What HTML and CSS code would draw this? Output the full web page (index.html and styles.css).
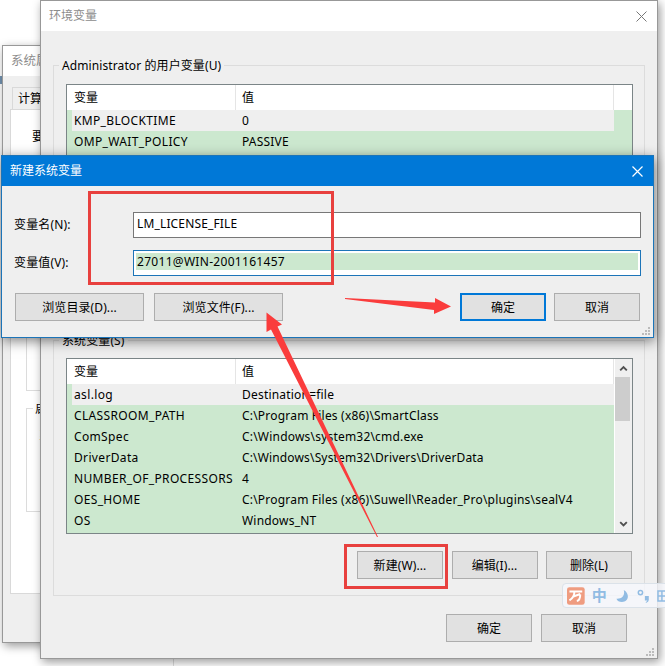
FILE: index.html
```html
<!DOCTYPE html>
<html lang="zh-CN">
<head>
<meta charset="utf-8">
<title>环境变量</title>
<link rel="stylesheet" href="styles.css">
</head>
<body>
<main class="desktop">
  <i class="desktop-line"></i>
  <i class="desktop-mark"></i>
  <section class="window props">
    <header class="titlebar">系统属性</header>
    <div class="tab">计算机名</div>
    <div class="sheet">
      <p class="sheet-note">要进行</p>
      <div class="sheet-group first"></div>
      <div class="sheet-group second"><span class="sheet-legend">启动</span><p class="sheet-text">系统</p></div>
    </div>
  </section>

  <section class="window env">
    <header class="titlebar">环境变量
      <svg class="close" viewBox="0 0 11 11"><path d="M.5.5l10 10M10.5.5l-10 10"/></svg>
    </header>
    <div class="group user">
      <div class="legend">Administrator 的用户变量(U)</div>
      <div class="list">
        <div class="table">
          <div class="row head"><span>变量</span><span>值</span></div>
          <div class="row selected"><span>KMP_BLOCKTIME</span><span>0</span></div>
          <div class="row"><span>OMP_WAIT_POLICY</span><span>PASSIVE</span></div>
        </div>
        <div class="gutter"></div>
      </div>
    </div>
    <div class="group system">
      <div class="legend">系统变量(S)</div>
      <div class="list">
        <div class="table">
          <div class="row head"><span>变量</span><span>值</span></div>
          <div class="row selected"><span>asl.log</span><span>Destination=file</span></div>
          <div class="row"><span>CLASSROOM_PATH</span><span>C:\Program Files (x86)\SmartClass</span></div>
          <div class="row"><span>ComSpec</span><span>C:\Windows\system32\cmd.exe</span></div>
          <div class="row"><span>DriverData</span><span class="tight">C:\Windows\System32\Drivers\DriverData</span></div>
          <div class="row"><span>NUMBER_OF_PROCESSORS</span><span>4</span></div>
          <div class="row"><span>OES_HOME</span><span>C:\Program Files (x86)\Suwell\Reader_Pro\plugins\sealV4</span></div>
          <div class="row"><span>OS</span><span>Windows_NT</span></div>
        </div>
        <div class="scrollbar">
          <svg viewBox="0 0 18 18"><path d="M5.500 11.500L9 8l3.500 3.500"/></svg>
          <div class="thumb"></div>
          <svg class="down" viewBox="0 0 18 18"><path d="M5.500 7L9 10.500 12.500 7"/></svg>
        </div>
      </div>
      <div class="actions">
        <button>新建(W)...</button><button>编辑(I)...</button><button>删除(L)</button>
      </div>
    </div>
    <footer class="confirm"><button>确定</button><button>取消</button></footer>
    <svg class="grip" viewBox="0 0 8 8"><path d="M6 0h2v2H6zM6 3h2v2H6zM3 3h2v2H3zM6 6h2v2H6zM3 6h2v2H3zM0 6h2v2H0z"/></svg>
  </section>

  <section class="window dialog">
    <header class="titlebar">新建系统变量
      <svg class="close" viewBox="0 0 11 11"><path d="M.5.5l10 10M10.5.5l-10 10"/></svg>
    </header>
    <div class="form">
      <div class="field"><label>变量名(N):</label><div class="input"><span>LM_LICENSE_FILE</span></div></div>
      <div class="field"><label>变量值(V):</label><div class="input focus"><span>27011@WIN-2001161457</span></div></div>
      <div class="dialog-actions">
        <button class="wide">浏览目录(D)...</button><button class="wide">浏览文件(F)...</button>
        <button class="primary">确定</button><button>取消</button>
      </div>
    </div>
    <svg class="grip" viewBox="0 0 8 8"><path d="M6 0h2v2H6zM6 3h2v2H6zM3 3h2v2H3zM6 6h2v2H6zM3 6h2v2H3zM0 6h2v2H0z"/></svg>
  </section>

  <div class="ime">
    <svg viewBox="0 0 18 18" class="ime-logo"><rect width="18" height="18" rx="2.500"/><path d="M2.500 4.500h13M7.500 5C7.500 9 5 12 2.500 13.500M6.500 9.500l7-2.500M13.500 7.500c0 3-.5 6-3.500 6.500"/></svg>
    <span class="ime-mode">中</span>
    <svg viewBox="0 0 14 14" class="ime-moon"><path d="M8.500.5c7 4 5.500 13-2 13C3.500 13.500 1.500 12.500.5 10 7 10.500 10 6 8.500.5z"/></svg>
    <svg viewBox="0 0 13 14" class="ime-punct"><circle cx="3.500" cy="3.500" r="2.200"/><path d="M8 7h4v4q0 2-3 3v-1q1.500-.5 1.500-1.500H8z"/></svg>
    <svg viewBox="0 0 14 14" class="ime-keys"><path d="M1 2h14v10H1zM1 7h14M5 2v10M9 2v10"/></svg>
  </div>

  <svg class="marks" viewBox="0 0 665 666">
    <rect x="89.500" y="192.500" width="243" height="91"/>
    <rect x="345.500" y="545.500" width="101" height="42"/>
    <path d="M345 298L435 302.500V298L451 306.500 434 314V310L345 299z"/>
    <path d="M266.500 312.500L282 324.500 277.500 326.500 378 537 377 537 271 329.500 266.500 332z"/>
  </svg>
</main>
</body>
</html>
```
FILE: styles.css
```css
* { box-sizing: border-box; }
body { margin: 0; }
.desktop {
  position: relative; width: 665px; height: 666px; overflow: hidden; background: #fff;
  font: 12px/20px "Noto Sans", "Noto Sans CJK SC", sans-serif; color: #000; white-space: nowrap;
}
p { margin: 0; }
svg { display: block; }
.desktop-line { position: absolute; left: 173px; top: 655px; width: 1px; height: 11px; background: #ddd; }
.desktop-mark { position: absolute; left: 0; top: 76px; width: 2px; height: 8px; background: #7292b0; }

.window { position: absolute; background: #efefef; border: 1px solid #989898; box-shadow: 2px 3px 9px rgba(0,0,0,.4); }
.titlebar { display: flex; justify-content: space-between; align-items: center; height: 30px; background: #fff; color: #8c8c8c; padding: 0 10px 0 8px; }
.close { width: 11px; height: 11px; fill: none; stroke: #777; stroke-width: 1; }
.grip { position: absolute; right: 3px; bottom: 2px; width: 8px; height: 8px; fill: #bbb; }

.props { left: 2px; top: 45px; width: 120px; height: 598px; }
.props .titlebar { font-size: 12.500px; }
.tab { margin: 11px 0 0 9px; width: 80px; height: 22px; padding-left: 5px; border: 1px solid #d9d9d9; border-bottom: 0; line-height: 21px; }
.sheet { margin-left: 7px; height: 485px; background: #fff; border: 1px solid #d9d9d9; padding: 17px 0 0 15px; }
.sheet-note { padding-left: 6px; }
.sheet-group { border: 1px solid #dcdcdc; }
.first { height: 235px; margin-top: 9px; }
.second { height: 104px; margin-top: 17px; padding-left: 6px; }
.sheet-legend { display: block; width: 40px; margin-top: -10px; padding-left: 2px; background: #fff; }
.sheet-text { padding: 7px 0 0 6px; }

.env { left: 40px; top: 0; width: 618px; height: 659px; }
.group { margin-left: 12px; width: 592px; border: 1px solid #dcdcdc; padding-left: 12px; }
.user { margin-top: 34px; height: 256px; }
.system { margin-top: 19px; height: 256px; }
.legend { width: max-content; height: 20px; margin: -10px 0 0 -7px; padding: 0 3px; background: #efefef; letter-spacing: .1px; }
.list { display: flex; width: 567px; border: 1px solid #7b8587; background: #cce8cf; }
.user .list { height: 220px; margin-top: 8px; }
.system .list { height: 176px; margin-top: 7px; }
.table { width: 547px; }
.row { display: grid; grid-template-columns: 163px 1fr; height: 21px; margin-left: 5px; line-height: 22px; letter-spacing: .2px; }
.row span { padding-left: 2px; }
.row span:first-child { letter-spacing: .35px; }
.row span + span { padding-left: 7px; }
.row .tight { letter-spacing: .15px; }
.selected { background: #efefef; }
.row.head { height: 25px; margin-left: 0; padding-left: 5px; line-height: 25px; background: #fff; border-right: 1px solid #e5e5e5; }
.row.head span { letter-spacing: 0; }
.head span + span { border-left: 1px solid #e5e5e5; padding-left: 6px; }
.gutter { flex: 1; height: 25px; background: #fff; }
.scrollbar { flex: 1; display: flex; flex-direction: column; background: #efefef; border-left: 1px solid #fff; }
.scrollbar svg { width: 17px; height: 18px; fill: none; stroke: #505050; stroke-width: 2; }
.thumb { width: 15px; height: 44px; background: #cdcdcd; }
.scrollbar .down { margin-top: auto; }

button { width: 86px; height: 28px; padding: 0; border: 1px solid #adadad; border-radius: 0; background: #e1e1e1; color: #000; font: inherit; line-height: 25px; }
.actions { display: flex; justify-content: flex-end; gap: 8.500px; padding-right: 12px; margin-top: 17px; }
.actions button { letter-spacing: .1px; }
.confirm { display: flex; justify-content: flex-end; gap: 9px; padding-right: 30px; margin-top: 18px; }

.dialog { left: 1px; top: 155px; width: 653px; height: 183px; border-color: #1c74b8; box-shadow: 1px 3px 12px rgba(0,0,0,.5); }
.dialog .titlebar { background: #0078d7; color: #fff; padding: 0 10px 0 8px; }
.dialog .close { stroke: #fff; stroke-width: 1.200; }
.form { padding: 26px 12px 0 13px; }
.field { display: flex; height: 26px; margin-bottom: 12px; }
.field label { width: 118px; line-height: 25px; margin-left: -1px; letter-spacing: .15px; }
.field .input { width: 508px; margin-left: 1px; border: 1px solid #777; background: #fff; padding: 2px; }
.input span { display: block; height: 17px; line-height: 18px; padding-left: 1px; letter-spacing: .15px; }
.field .input.focus { border-color: #1c74b8; }
.input.focus span { background: #cce8cf; letter-spacing: .3px; }
.dialog-actions { display: flex; margin-top: 17px; gap: 10px; }
.dialog-actions .wide { width: 129px; letter-spacing: .1px; }
.dialog-actions .primary { margin-left: 167px; border: 2px solid #0078d7; line-height: 23px; }
.dialog-actions .primary + button { margin-left: -2px; }

.ime { position: absolute; left: 562px; top: 583px; width: 110px; height: 25px; display: flex; align-items: center; padding-left: 4px; background: rgba(246,248,252,.8); border: 1px solid #dbe2e9; border-radius: 4px; color: #91bce3; }
.ime-logo { width: 18px; height: 18px; fill: #ef9c80; stroke: none; }
.ime-logo path { fill: none; stroke: #fff; stroke-width: 2; }
.ime-mode { width: 15px; margin-left: 7px; font-size: 15px; font-weight: 700; line-height: 20px; margin-top: -2px; }
.ime-moon { width: 13px; height: 14px; margin-left: 9px; fill: #91bce3; }
.ime-punct { width: 13px; height: 14px; margin-left: 9px; fill: #91bce3; }
.ime-punct circle { fill: none; stroke: #91bce3; stroke-width: 1.500; }
.ime-keys { width: 14px; height: 14px; margin-left: 7px; fill: none; stroke: #91bce3; stroke-width: 1.500; }

.marks { position: absolute; left: 0; top: 0; width: 665px; height: 666px; fill: #fa3c3c; }
.marks rect { fill: none; stroke: #e8403e; stroke-width: 3; }
```
